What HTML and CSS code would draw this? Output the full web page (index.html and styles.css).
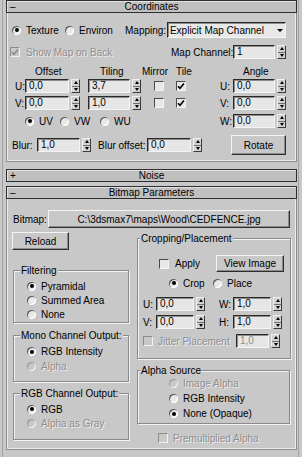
FILE: index.html
```html
<!DOCTYPE html>
<html>
<head>
<meta charset="utf-8">
<link rel="stylesheet" href="styles.css">
</head>
<body>
<div class="panel">
  <div class="rollout">
    <div class="head"><span class="sign">–</span><span class="title">Coordinates</span></div>
    <div class="body coords">
      <div class="row r-map">
        <span class="opt o-texture"><span class="radio on"></span>Texture</span>
        <span class="opt o-environ"><span class="radio"></span>Environ</span>
        <span class="l-mapping">Mapping:</span>
        <div class="dropdown"><span class="dd-text">Explicit Map Channel</span><span class="dd-arrow"></span></div>
      </div>
      <div class="row r-back">
        <span class="opt o-back dis-t"><span class="cb dis"><svg viewBox="0 0 8 8"><path d="M1 4.2 L3 6.3 L7 1.5" fill="none" stroke="#8a8a8a" stroke-width="1.6"/></svg></span>Show Map on Back</span>
        <span class="l-mapch">Map Channel:</span>
        <div class="spin"><span class="field f-42">1</span><span class="arrows"><i class="up"></i><i class="dn"></i></span></div>
      </div>
      <div class="row r-labels">
        <span class="c-offset">Offset</span><span class="c-tiling">Tiling</span><span class="c-mirror">Mirror</span><span class="c-tile">Tile</span><span>Angle</span>
      </div>
      <div class="row r-u">
        <span class="axis a-first">U:</span>
        <div class="spin"><span class="field f-44">0,0</span><span class="arrows"><i class="up"></i><i class="dn"></i></span></div>
        <div class="spin s-tiling"><span class="field f-42">3,7</span><span class="arrows"><i class="up"></i><i class="dn"></i></span></div>
        <span class="cb cb-mirror"></span>
        <span class="cb cb-tile"><svg viewBox="0 0 8 8"><path d="M1 4.2 L3 6.3 L7 1.5" fill="none" stroke="#000" stroke-width="1.6"/></svg></span>
        <span class="axis push">U:</span>
        <div class="spin"><span class="field f-42">0,0</span><span class="arrows"><i class="up"></i><i class="dn"></i></span></div>
      </div>
      <div class="row r-v">
        <span class="axis a-first">V:</span>
        <div class="spin"><span class="field f-44">0,0</span><span class="arrows"><i class="up"></i><i class="dn"></i></span></div>
        <div class="spin s-tiling"><span class="field f-42">1,0</span><span class="arrows"><i class="up"></i><i class="dn"></i></span></div>
        <span class="cb cb-mirror"></span>
        <span class="cb cb-tile"><svg viewBox="0 0 8 8"><path d="M1 4.2 L3 6.3 L7 1.5" fill="none" stroke="#000" stroke-width="1.6"/></svg></span>
        <span class="axis push">V:</span>
        <div class="spin"><span class="field f-42">0,0</span><span class="arrows"><i class="up"></i><i class="dn"></i></span></div>
      </div>
      <div class="row r-w">
        <span class="opt o-uv"><span class="radio on"></span>UV</span>
        <span class="opt o-vw"><span class="radio"></span>VW</span>
        <span class="opt"><span class="radio"></span>WU</span>
        <span class="axis push">W:</span>
        <div class="spin"><span class="field f-42">0,0</span><span class="arrows"><i class="up"></i><i class="dn"></i></span></div>
      </div>
      <div class="row r-blur">
        <span class="l-blur">Blur:</span>
        <div class="spin"><span class="field f-43">1,0</span><span class="arrows"><i class="up"></i><i class="dn"></i></span></div>
        <span class="l-bluroff">Blur offset:</span>
        <div class="spin"><span class="field f-44">0,0</span><span class="arrows"><i class="up"></i><i class="dn"></i></span></div>
        <span class="btn b-rotate push">Rotate</span>
      </div>
    </div>
  </div>

  <div class="rollout noise">
    <div class="head"><span class="sign">+</span><span class="title">Noise</span></div>
  </div>

  <div class="rollout bitmap">
    <div class="head"><span class="sign">–</span><span class="title">Bitmap Parameters</span></div>
    <div class="body bm-body">
      <div class="row r-path">
        <span class="l-bitmap">Bitmap:</span>
        <span class="btn b-path">C:\3dsmax7\maps\Wood\CEDFENCE.jpg</span>
      </div>
      <div class="cols">
        <div class="col-left">
          <span class="btn b-reload">Reload</span>
          <div class="grp g-filter">
            <span class="grp-title">Filtering</span>
            <div class="grp-rows">
              <div class="row g-row"><span class="radio on"></span>Pyramidal</div>
              <div class="row g-row"><span class="radio"></span>Summed Area</div>
              <div class="row g-row"><span class="radio"></span>None</div>
            </div>
          </div>
          <div class="grp g-mono">
            <span class="grp-title">Mono Channel Output:</span>
            <div class="grp-rows">
              <div class="row g-row"><span class="radio on"></span>RGB Intensity</div>
              <div class="row g-row dis-t"><span class="radio off"></span>Alpha</div>
            </div>
          </div>
          <div class="grp g-rgb">
            <span class="grp-title">RGB Channel Output:</span>
            <div class="grp-rows">
              <div class="row g-row"><span class="radio on"></span>RGB</div>
              <div class="row g-row dis-t"><span class="radio off"></span>Alpha as Gray</div>
            </div>
          </div>
        </div>
        <div class="col-right">
          <div class="grp g-crop">
            <span class="grp-title t-crop">Cropping/Placement</span>
            <div class="row r-apply">
              <span class="cb cb-apply"></span><span class="l-apply">Apply</span>
              <span class="btn b-view push">View Image</span>
            </div>
            <div class="row r-crop">
              <span class="opt o-crop"><span class="radio on"></span>Crop</span>
              <span class="opt"><span class="radio"></span>Place</span>
            </div>
            <div class="row r-cu">
              <span class="l-cu">U:</span>
              <div class="spin"><span class="field f-38">0,0</span><span class="arrows"><i class="up"></i><i class="dn"></i></span></div>
              <span class="l-cw">W:</span>
              <div class="spin"><span class="field f-38">1,0</span><span class="arrows"><i class="up"></i><i class="dn"></i></span></div>
            </div>
            <div class="row r-cv">
              <span class="l-cu">V:</span>
              <div class="spin"><span class="field f-38">0,0</span><span class="arrows"><i class="up"></i><i class="dn"></i></span></div>
              <span class="l-cw">H:</span>
              <div class="spin"><span class="field f-38">1,0</span><span class="arrows"><i class="up"></i><i class="dn"></i></span></div>
            </div>
            <div class="row r-jit">
              <span class="cb dis cb-jit"></span><span class="l-jit dis-t">Jitter Placement</span>
              <div class="spin"><span class="field f-33 dis-f">1,0</span><span class="arrows"><i class="up"></i><i class="dn"></i></span></div>
            </div>
          </div>
          <div class="grp g-alpha">
            <span class="grp-title t-crop">Alpha Source</span>
            <div class="a-rows">
              <div class="row a-row dis-t"><span class="radio off"></span>Image Alpha</div>
              <div class="row a-row"><span class="radio"></span>RGB Intensity</div>
              <div class="row a-row"><span class="radio on"></span>None (Opaque)</div>
            </div>
          </div>
          <div class="row r-premul dis-t"><span class="cb dis"></span>Premultiplied Alpha</div>
        </div>
      </div>
    </div>
  </div>
</div>
</body>
</html>
```

FILE: styles.css
```css
* { box-sizing: border-box; }
html, body { margin: 0; padding: 0; }
body {
  background: #c8c8c8;
  font-family: "Liberation Sans", Arial, sans-serif;
  font-size: 10px;
  line-height: 11px;
  color: #000;
  width: 302px;
  height: 457px;
  overflow: hidden;
}
.panel {
  margin-left: 2px;
  width: 297px;
  height: 457px;
  border-left: 1px solid #a2a2a2;
  border-right: 1px solid #a2a2a2;
  padding-left: 3px;
}
.rollout { width: 291px; }
.head {
  height: 13px;
  border: 1px solid #2e2e2e;
  background: #c0c0c0;
  box-shadow: inset 1px 1px 0 #e2e2e2;
  display: grid;
  grid-template-columns: 16px 1fr 16px;
  align-items: center;
}
.sign { padding-left: 3px; }
.title { text-align: center; }
.body {
  border: 1px solid #8c8c8c;
  border-top: none;
  box-shadow: inset 1px 0 0 #ececec, inset -1px -1px 0 #ececec;
}
.coords { height: 149px; padding-top: 9px; padding-right: 10px; }
.noise { margin-top: 7px; }
.bitmap { margin-top: 4px; }
.bm-body { height: 251px; padding-top: 11px; }

.row { display: flex; align-items: center; white-space: nowrap; }
.opt { display: flex; align-items: center; flex: none; }
.push { margin-left: auto; }
.dis-t { color: #8e8e8e; text-shadow: 1px 1px 0 #efefef; }

/* radios & checkboxes */
.radio {
  width: 9px; height: 9px; border-radius: 50%;
  background: #e8e8e8;
  box-shadow: inset 1px 1px 0 #5a5a5a, inset -1px -1px 0 #ffffff;
  margin-right: 5px; flex: none;
  display: flex; align-items: center; justify-content: center;
}
.radio.on::after { content: ""; width: 4px; height: 4px; border-radius: 50%; background: #000; }
.radio.off { background: #c8c8c8; box-shadow: inset 1px 1px 0 #9a9a9a, inset -1px -1px 0 #f2f2f2; }
.cb {
  width: 10px; height: 10px; flex: none;
  background: #e8e8e8;
  border: 1px solid; border-color: #4a4a4a #f4f4f4 #f4f4f4 #4a4a4a;
  display: flex; align-items: center; justify-content: center;
}
.cb svg { width: 8px; height: 8px; display: block; }
.cb.dis { background: #c8c8c8; border-color: #8c8c8c #f2f2f2 #f2f2f2 #8c8c8c; }

/* spinners */
.spin { display: flex; gap: 2px; height: 14px; flex: none; }
.field {
  background: #e6e6e6;
  border: 1px solid; border-color: #2a2a2a #f4f4f4 #f4f4f4 #2a2a2a;
  box-shadow: inset 1px 1px 0 #8c8c8c;
  padding-left: 3px; line-height: 12px;
}
.dis-f { color: #8e8e8e; }
.f-33 { width: 33px; }
.f-38 { width: 38px; }
.f-42 { width: 42px; }
.f-43 { width: 43px; }
.f-44 { width: 44px; }
.arrows {
  width: 9px; display: flex; flex-direction: column;
  border: 1px solid; border-color: #f0f0f0 #3a3a3a #3a3a3a #f0f0f0;
  background: #d2d2d2;
}
.arrows i { flex: 1; display: flex; align-items: center; justify-content: center; }
.arrows i:first-child { border-bottom: 1px solid #707070; }
.arrows i::before { content: ""; border-left: 2px solid transparent; border-right: 2px solid transparent; }
.arrows .up::before { border-bottom: 3px solid #000; }
.arrows .dn::before { border-top: 3px solid #000; }

/* buttons */
.btn {
  background: #c8c8c8;
  border: 1px solid; border-color: #f4f4f4 #2e2e2e #2e2e2e #f4f4f4;
  box-shadow: inset -1px -1px 0 #8c8c8c;
  display: flex; align-items: center; justify-content: center; flex: none;
}

/* coordinates rows */
.r-map { height: 16px; padding-left: 5px; }
.o-texture { width: 53px; }
.o-environ { width: 60px; }
.l-mapping { width: 43px; }
.dropdown {
  width: 122px; height: 16px; display: flex; align-items: center;
  background: #e8e8e8;
  border: 1px solid; border-color: #2a2a2a #f4f4f4 #f4f4f4 #2a2a2a;
  box-shadow: inset 1px 1px 0 #8c8c8c;
}
.dd-text { flex: 1; padding-left: 2px; }
.dd-arrow { width: 11px; display: flex; justify-content: center; }
.dd-arrow::before { content: ""; border-left: 3px solid transparent; border-right: 3px solid transparent; border-top: 3px solid #000; }

.r-back { margin-top: 7px; height: 14px; }
.o-back { margin-left: 3px; width: 161px; }
.o-back .cb { margin-right: 6px; }
.l-mapch { width: 62px; }

.r-labels { margin-top: 7px; height: 10px; }
.c-offset { margin-left: 28px; width: 65px; }
.c-tiling { width: 42px; }
.c-mirror { width: 34px; }
.c-tile { width: 67px; }

.r-u { margin-top: 3px; height: 14px; }
.r-v { margin-top: 3px; height: 14px; }
.axis { width: 13px; flex: none; }
.a-first { margin-left: 8px; width: 10px; }
.s-tiling { margin-left: 8px; }
.cb-mirror { margin-left: 13px; }
.cb-tile { margin-left: 12px; }

.r-w { margin-top: 4px; height: 14px; }
.o-uv { margin-left: 18px; width: 35px; }
.o-vw { width: 40px; }

.r-blur { margin-top: 7px; height: 20px; }
.l-blur { margin-left: 5px; width: 25px; }
.l-bluroff { margin-left: 7px; width: 49px; }
.b-rotate { width: 55px; height: 20px; }

/* bitmap */
.r-path { height: 18px; }
.l-bitmap { margin-left: 6px; width: 35px; }
.b-path { width: 242px; height: 18px; }
.cols { display: flex; margin-top: 4px; }
.col-left { margin-left: 5px; width: 125px; }
.col-right { width: 154px; }
.b-reload { width: 57px; height: 18px; }

.grp {
  border: 1px solid #8a8a8a;
  box-shadow: 1px 1px 0 #f2f2f2, inset 1px 1px 0 #f2f2f2;
}
.grp-title {
  display: block; width: max-content;
  margin: -6px 0 0 6px; height: 11px; padding: 0 1px;
  background: #c8c8c8;
}
.t-crop { margin-left: 2px; }
.g-filter, .g-mono, .g-rgb { margin-left: 1px; width: 116px; }
.g-filter { margin-top: 20px; height: 53px; }
.g-mono { margin-top: 12px; height: 47px; }
.g-rgb { margin-top: 11px; height: 47px; }
.grp-rows { margin-top: 3px; }
.g-row { height: 14px; padding-left: 13px; }
.g-mono .g-row { height: 15px; }

.g-crop { margin-top: 6px; width: 154px; height: 121px; padding-right: 6px; }
.r-apply { margin-top: 11px; height: 17px; }
.cb-apply { margin-left: 21px; }
.l-apply { margin-left: 6px; }
.b-view { width: 68px; height: 17px; }
.r-crop { margin-top: 5px; height: 12px; }
.o-crop { margin-left: 31px; width: 44px; }
.r-cu { margin-top: 8px; height: 14px; }
.r-cv { margin-top: 4px; height: 14px; }
.l-cu { margin-left: 5px; width: 13px; }
.l-cw { margin-left: 14px; width: 14px; }
.r-jit { margin-top: 5px; height: 14px; }
.cb-jit { margin-left: 5px; }
.l-jit { margin-left: 5px; width: 78px; }

.g-alpha { margin-top: 11px; width: 153px; height: 54px; }
.a-row { height: 15px; padding-left: 31px; }
.r-premul { margin-top: 9px; height: 10px; padding-left: 21px; }
.r-premul .cb { margin-right: 5px; }
```
